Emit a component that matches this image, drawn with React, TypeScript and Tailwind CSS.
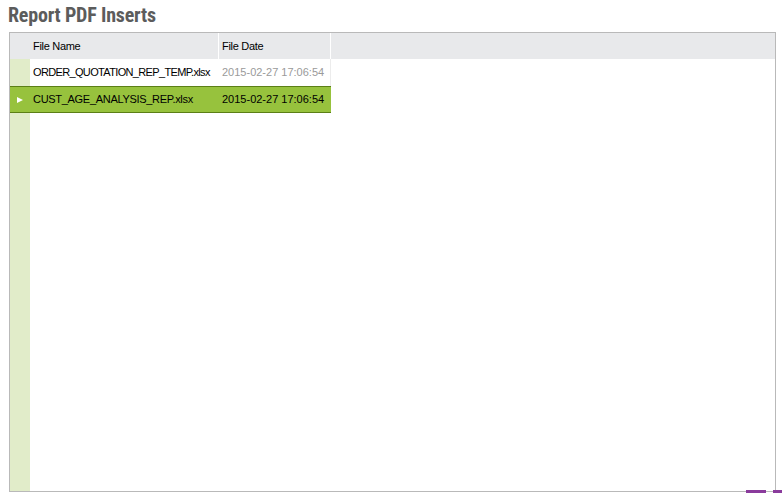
const rows = [
  { name: "ORDER_QUOTATION_REP_TEMP.xlsx", date: "2015-02-27 17:06:54", selected: false, track: "tracking-[-0.65px]" },
  { name: "CUST_AGE_ANALYSIS_REP.xlsx", date: "2015-02-27 17:06:54", selected: true, track: "tracking-[-0.3px]" },
];

export default function App() {
  return (
    <div className="relative h-[493px] w-[782px] overflow-hidden bg-white font-['Liberation_Sans',Arial,sans-serif]">
      <h1 className="h-[32px] pl-[8px] pt-[3px] text-[20px] font-bold leading-[24px] tracking-[-0.2px] text-[#5c5c5c] font-['Liberation_Sans_Narrow','Roboto_Condensed','Liberation_Sans',sans-serif]">
        Report PDF Inserts
      </h1>
      <div className="ml-[9px] flex h-[460px] w-[767px] border border-[#b9b9b9]">
        <div className="flex w-full flex-col">
          <div className="flex h-[26px] bg-[#e8e9eb] text-[11px] tracking-[-0.3px] text-black">
            <div className="w-[20px]" />
            <div className="flex w-[189px] items-center border-r border-white pl-[3px]">File Name</div>
            <div className="flex w-[112px] items-center border-r border-white pl-[3px]">File Date</div>
          </div>
          {rows.map((r) =>
            r.selected ? (
              <div
                key={r.name}
                className="flex h-[27px] w-[321px] border-y border-[#5b7f16] bg-[#97c23d] text-[11px] text-black"
              >
                <div className="flex w-[20px] items-center justify-center">
                  <span className="block h-0 w-0 border-y-[3.5px] border-l-[6px] border-y-transparent border-l-white" />
                </div>
                <div className={`flex w-[189px] items-center pl-[3px] ${r.track}`}>{r.name}</div>
                <div className="flex w-[112px] items-center pl-[3px]">{r.date}</div>
              </div>
            ) : (
              <div key={r.name} className="flex h-[27px] text-[11px]">
                <div className="w-[20px] bg-[#e1ecc9]" />
                <div className={`flex w-[189px] items-center pl-[3px] text-black ${r.track}`}>{r.name}</div>
                <div className="flex w-[112px] items-center border-r border-[#ececec] pl-[3px] text-[#9a9a9a]">
                  {r.date}
                </div>
              </div>
            )
          )}
          <div className="flex-1">
            <div className="h-full w-[20px] bg-[#e1ecc9]" />
          </div>
        </div>
      </div>
      <div className="absolute left-[746px] top-[490px] h-[3px] w-[20px] bg-[#8a3b9c]" />
      <div className="absolute left-[773px] top-[490px] h-[3px] w-[9px] bg-[#8a3b9c]" />
    </div>
  );
}
